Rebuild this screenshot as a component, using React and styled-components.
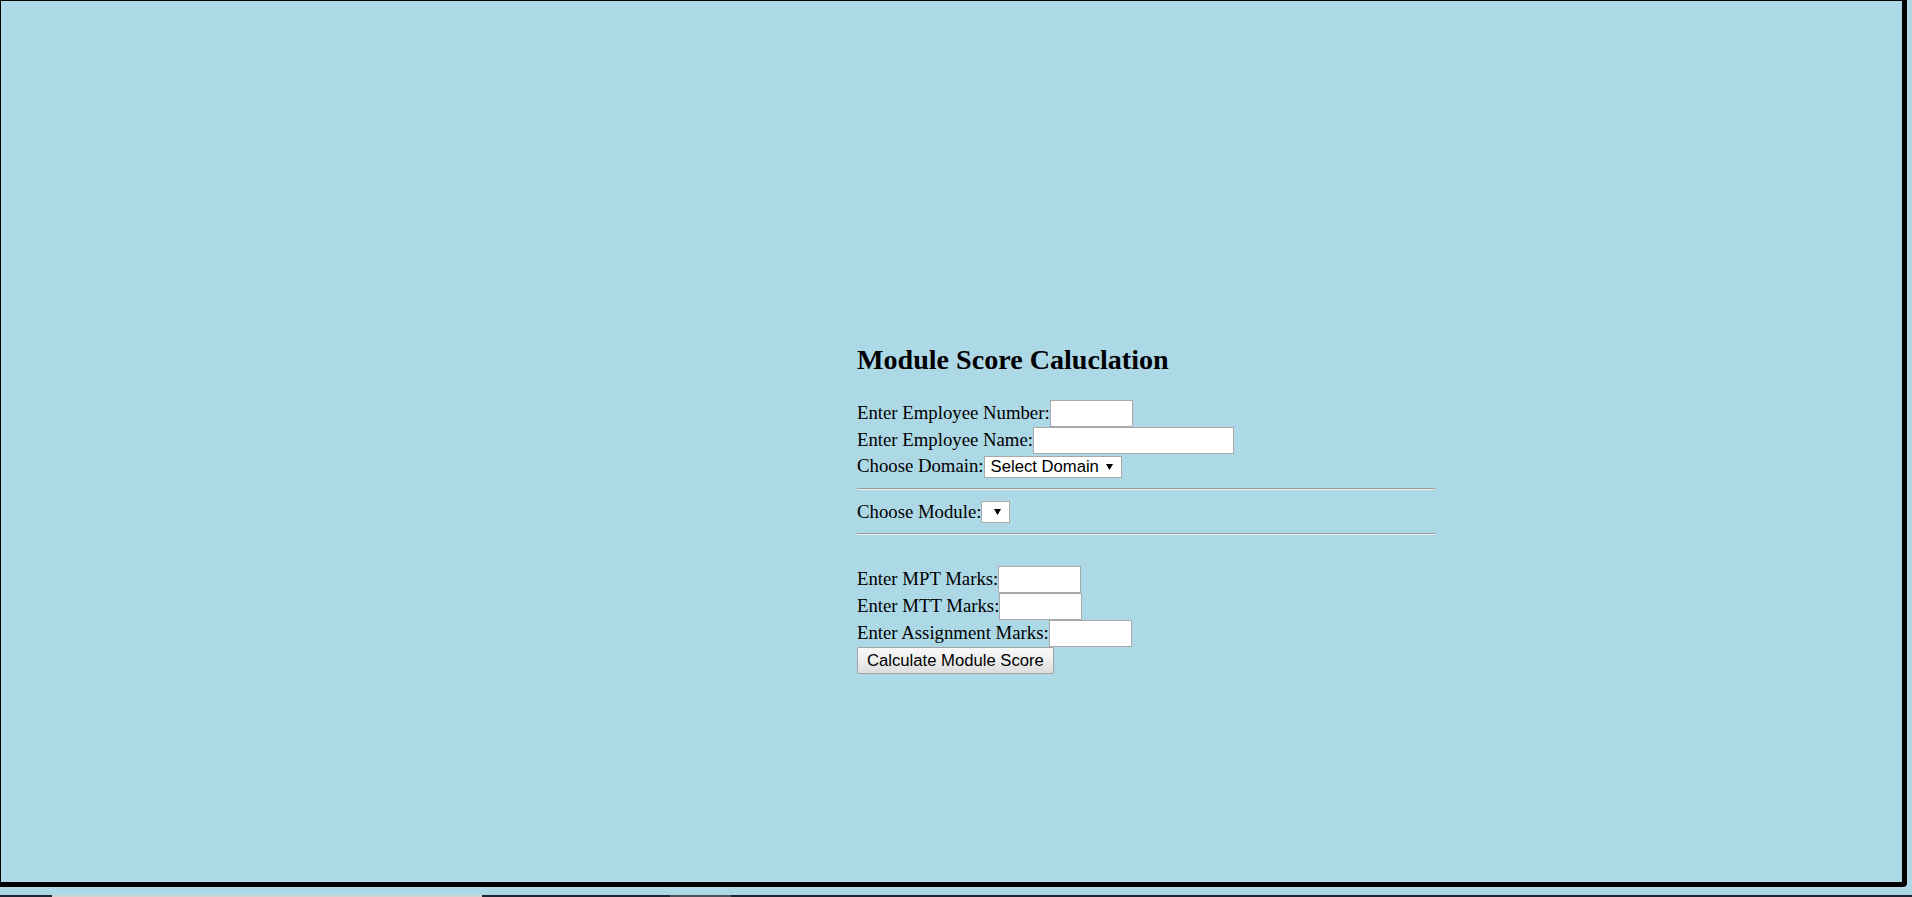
import React from "react";
import styled, { createGlobalStyle } from "styled-components";

const Global = createGlobalStyle`
  html, body { margin: 0; padding: 0; }
  body { background: #add8e6; overflow: hidden; }
`;

const Page = styled.div`
  width: 1912px;
  height: 897px;
  display: flex;
  flex-direction: column;
`;

const Frame = styled.div`
  box-sizing: border-box;
  width: 1907px;
  height: 887px;
  border-style: solid;
  border-color: #000;
  border-width: 1px 5px 5px 1px;
  border-bottom-right-radius: 4px;
  padding: 342px 0 0 856px;
`;

const Form = styled.form`
  width: 578px;
  font-family: "Liberation Serif", "Times New Roman", serif;
  font-size: 18.75px;
  color: #000;
`;

const Title = styled.h2`
  margin: 0 0 23px;
  font-size: 28.1px;
  line-height: 34px;
  font-weight: bold;
`;

const Row = styled.div`
  display: flex;
  align-items: baseline;
`;

const Label = styled.label`
  line-height: 23px;
  white-space: nowrap;
`;

const TextInput = styled.input`
  box-sizing: border-box;
  width: ${(p) => p.$w}px;
  height: 27px;
  margin: 0;
  padding: 0 2px;
  border: 1px solid #a9a9a9;
  background: #fff;
  font: 16.67px "Liberation Sans", Arial, sans-serif;
  outline: none;
`;

const SelectWrap = styled.span`
  position: relative;
  display: inline-flex;
`;

const Select = styled.select`
  appearance: none;
  -webkit-appearance: none;
  box-sizing: border-box;
  width: ${(p) => p.$w}px;
  height: 22px;
  margin: 0;
  padding: 0 20px 0 6px;
  border: 1px solid #a9a9a9;
  border-radius: 0;
  background: #fff;
  color: #000;
  font: 16.67px "Liberation Sans", Arial, sans-serif;
  outline: none;
`;

const Arrow = styled.svg`
  position: absolute;
  right: 9px;
  top: 8px;
  width: 7px;
  height: 6px;
  pointer-events: none;
`;

const Rule = styled.hr`
  margin: 10px 0;
  height: 0;
  border: 0;
  border-top: 1px solid #9a9a9a;
  border-bottom: 1px solid #eeeeee;
`;

const Blank = styled.div`
  height: 21px;
`;

const Button = styled.button`
  box-sizing: border-box;
  height: 27px;
  margin: 0;
  padding: 0 9px;
  border: 1px solid #a3a3a3;
  border-radius: 2px;
  background: linear-gradient(#f9f9f9, #efefef 45%, #dddddd);
  color: #000;
  font: 16.67px "Liberation Sans", Arial, sans-serif;
  white-space: nowrap;
`;

const Strip = styled.div`
  margin-top: 8px;
  height: 2px;
  display: flex;
`;

const Seg = styled.div`
  width: ${(p) => p.$w}px;
  flex: ${(p) => (p.$grow ? 1 : "none")};
  background: ${(p) => p.$c};
`;

function Dropdown({ width, children }) {
  return (
    <SelectWrap>
      <Select $w={width} defaultValue={children ? "none" : undefined}>
        {children}
      </Select>
      <Arrow viewBox="0 0 7 6">
        <path d="M0 0 H7 L3.5 6 Z" fill="#000" />
      </Arrow>
    </SelectWrap>
  );
}

export default function App() {
  return (
    <>
      <Global />
      <Page>
        <Frame>
          <Form onSubmit={(e) => e.preventDefault()}>
            <Title>Module Score Caluclation</Title>
            <Row>
              <Label>Enter Employee Number:</Label>
              <TextInput $w={83} type="text" />
            </Row>
            <Row>
              <Label>Enter Employee Name:</Label>
              <TextInput $w={201} type="text" />
            </Row>
            <Row>
              <Label>Choose Domain:</Label>
              <Dropdown width={138}>
                <option value="none">Select Domain</option>
              </Dropdown>
            </Row>
            <Rule />
            <Row>
              <Label>Choose Module:</Label>
              <Dropdown width={29} />
            </Row>
            <Rule />
            <Blank />
            <Row>
              <Label>Enter MPT Marks:</Label>
              <TextInput $w={83} type="text" />
            </Row>
            <Row>
              <Label>Enter MTT Marks:</Label>
              <TextInput $w={83} type="text" />
            </Row>
            <Row>
              <Label>Enter Assignment Marks:</Label>
              <TextInput $w={83} type="text" />
            </Row>
            <Row>
              <Button type="button">Calculate Module Score</Button>
            </Row>
          </Form>
        </Frame>
        <Strip>
          <Seg $w={52} $c="#1c2530" />
          <Seg $w={430} $c="#d3d3d3" />
          <Seg $w={188} $c="#1c2530" />
          <Seg $w={61} $c="#4b5157" />
          <Seg $grow $c="#1c2530" />
        </Strip>
      </Page>
    </>
  );
}
